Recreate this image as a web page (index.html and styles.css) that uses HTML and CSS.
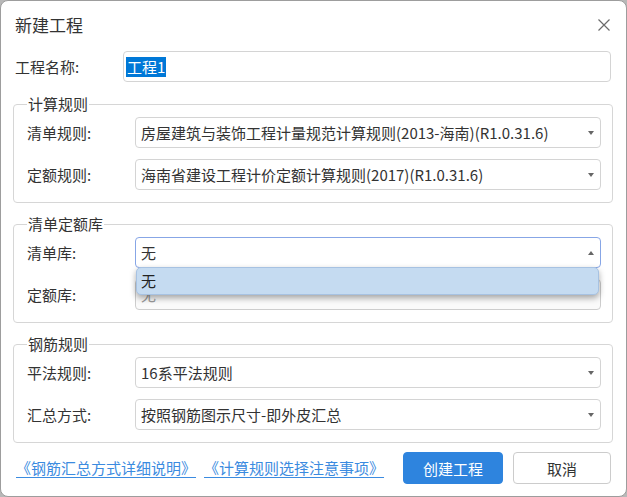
FILE: index.html
```html
<!DOCTYPE html>
<html lang="zh-CN">
<head>
<meta charset="utf-8">
<title>新建工程</title>
<link rel="stylesheet" href="styles.css">
</head>
<body>
<div class="dialog">
  <div class="titlebar">
    <span class="title">新建工程</span>
    <svg class="close" width="12" height="12" viewBox="0 0 12 12"><path d="M0.5 0.5L11.5 11.5M11.5 0.5L0.5 11.5" stroke="#6b6b6b" stroke-width="1.2" fill="none"/></svg>
  </div>

  <div class="row name-row">
    <span class="label">工程名称:</span>
    <div class="field input"><span class="selected">工程1</span></div>
  </div>

  <fieldset class="group">
    <legend>计算规则</legend>
    <div class="row">
      <span class="label">清单规则:</span>
      <div class="field select"><span class="value">房屋建筑与装饰工程计量规范计算规则(2013-海南)(R1.0.31.6)</span><span class="arrow down"></span></div>
    </div>
    <div class="row">
      <span class="label">定额规则:</span>
      <div class="field select"><span class="value">海南省建设工程计价定额计算规则(2017)(R1.0.31.6)</span><span class="arrow down"></span></div>
    </div>
  </fieldset>

  <fieldset class="group">
    <legend>清单定额库</legend>
    <div class="row">
      <span class="label">清单库:</span>
      <div class="field select focused"><span class="value">无</span><span class="arrow up"></span>
        <div class="popup"><span class="option">无</span></div>
      </div>
    </div>
    <div class="row">
      <span class="label">定额库:</span>
      <div class="field select disabled"><span class="value">无</span></div>
    </div>
  </fieldset>

  <fieldset class="group">
    <legend>钢筋规则</legend>
    <div class="row">
      <span class="label">平法规则:</span>
      <div class="field select"><span class="value">16系平法规则</span><span class="arrow down"></span></div>
    </div>
    <div class="row">
      <span class="label">汇总方式:</span>
      <div class="field select"><span class="value">按照钢筋图示尺寸-即外皮汇总</span><span class="arrow down"></span></div>
    </div>
  </fieldset>

  <div class="footer">
    <a class="link" href="#">《钢筋汇总方式详细说明》</a>
    <a class="link" href="#">《计算规则选择注意事项》</a>
    <span class="spacer"></span>
    <button class="btn primary">创建工程</button>
    <button class="btn">取消</button>
  </div>
</div>
</body>
</html>
```

FILE: styles.css
```css
* { box-sizing: border-box; }
html, body { margin: 0; padding: 0; }
body {
  background: #b8b8b8;
  font-family: "Noto Sans CJK SC", "Noto Sans", sans-serif;
  font-size: 15px;
  line-height: 20px;
  color: #333;
  width: 627px;
  height: 497px;
  overflow: hidden;
}
.dialog {
  width: 627px;
  height: 497px;
  background: #fff;
  border: 1px solid #9d9d9d;
  border-radius: 8px;
  padding: 0 13px 0 12px;
  display: flex;
  flex-direction: column;
  overflow: hidden;
}
.titlebar {
  height: 47px;
  flex: none;
  display: flex;
  align-items: center;
  justify-content: space-between;
  padding: 0 3px 0 2px;
}
.title { font-size: 17px; color: #333; }
.close { display: block; }

.row {
  display: flex;
  align-items: center;
}
.label {
  width: 108px;
  flex: none;
  color: #333;
}
.name-row {
  margin-top: 3px;
  padding: 0 2px 0 2px;
}
.field {
  flex: 1;
  height: 31px;
  border: 1px solid #d4d4d4;
  border-radius: 4px;
  display: flex;
  align-items: center;
  background: #fff;
  position: relative;
}
.input { padding-left: 2px; }
.selected {
  background: #0078d7;
  color: #fff;
  padding: 0 1px;
  line-height: 20px;
}
.select { padding: 0 6px 0 5px; }
.value { flex: 1; white-space: nowrap; overflow: hidden; }
.arrow {
  width: 0; height: 0;
  border-left: 3.5px solid transparent;
  border-right: 3.5px solid transparent;
}
.arrow.down { border-top: 4px solid #666; }
.arrow.up { border-bottom: 4px solid #666; }
.focused { border-color: #87a6e6; }
.disabled { background: #fafafa; border-color: #cdcdcd; color: #999; }
.popup {
  position: absolute;
  top: 100%;
  left: 0;
  right: 1px;
  height: 28px;
  background: #c5dbf1;
  border: 1px solid #a7c2e2;
  border-radius: 5px;
  box-shadow: 0 3px 6px rgba(0, 0, 0, 0.35);
  display: flex;
  align-items: center;
  padding-left: 4px;
  z-index: 2;
  color: #222;
}

.group {
  margin: 13px 0 0 0;
  padding: 4px 11px 12px 13px;
  border: 1px solid #d6d6d6;
  border-radius: 4px;
  display: flex;
  flex-direction: column;
  gap: 11px;
  min-width: 0;
}
.group + .group { margin-top: 12px; }
.group legend {
  padding: 0 1px;
  line-height: 18px;
  color: #333;
}

.footer {
  margin-top: 9px;
  display: flex;
  align-items: center;
  padding: 0 2px 0 3px;
  gap: 8px;
}
.link {
  color: #3b8be0;
  text-decoration: underline;
  text-underline-offset: 3px;
}
.spacer { flex: 1; }
.btn {
  font-family: inherit;
  font-size: 15px;
  height: 32px;
  width: 98px;
  border: 1px solid #cccccc;
  border-radius: 4px;
  background: #fff;
  color: #333;
  padding: 0;
}
.btn.primary {
  width: 100px;
  background: #2e84de;
  border-color: #2e84de;
  color: #fff;
  margin-right: 2px;
}
```
